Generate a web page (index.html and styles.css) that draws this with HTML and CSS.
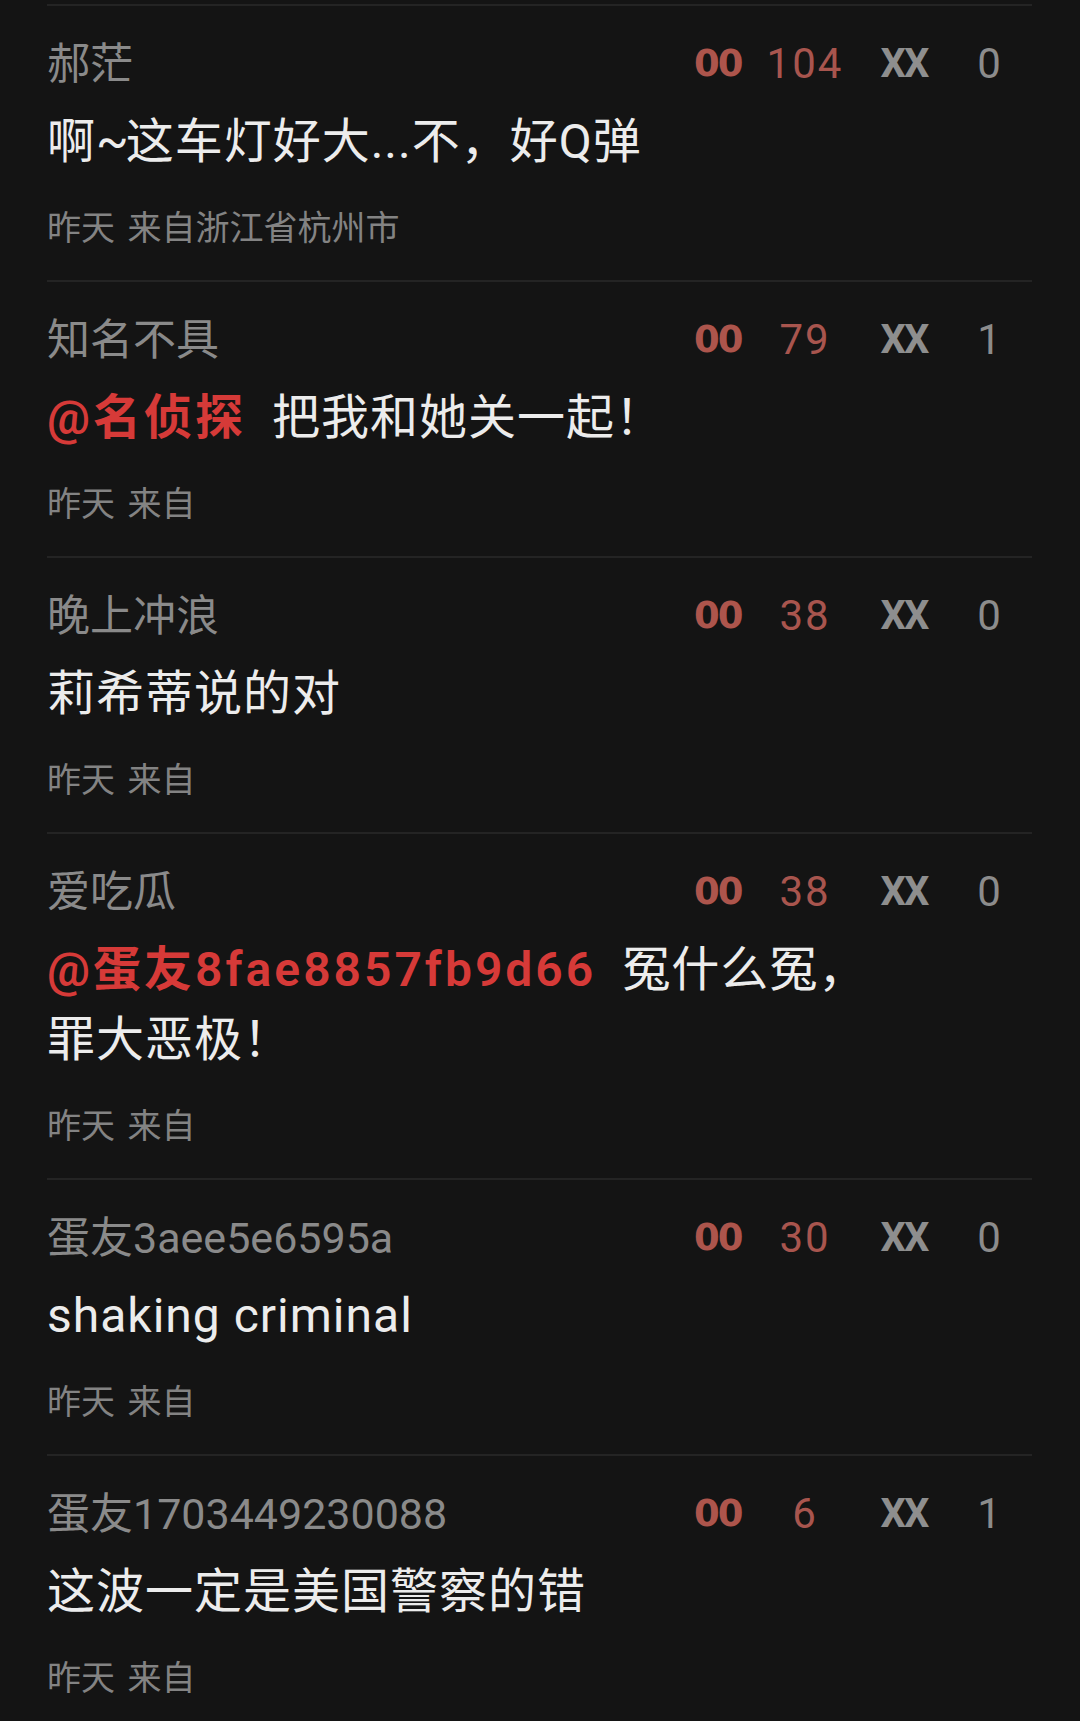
FILE: index.html
```html
<!DOCTYPE html>
<html lang="zh-CN">
<head>
<meta charset="utf-8">
<title>评论</title>
<link rel="stylesheet" href="styles.css">
</head>
<body>
<div class="list">
  <div class="comment">
    <div class="head">
      <span class="name">郝茫</span>
      <div class="stats">
        <span class="icon up">00</span><span class="count up">104</span>
        <span class="icon down">XX</span><span class="count down">0</span>
      </div>
    </div>
    <p class="text">啊<span class="tilde">~</span>这车灯好大...不，好Q弹</p>
    <div class="meta">昨天 来自浙江省杭州市</div>
  </div>
  <div class="comment">
    <div class="head">
      <span class="name">知名不具</span>
      <div class="stats">
        <span class="icon up">00</span><span class="count up">79</span>
        <span class="icon down">XX</span><span class="count down">1</span>
      </div>
    </div>
    <p class="text"><span class="mention">@名侦探</span>把我和她关一起！</p>
    <div class="meta">昨天 来自</div>
  </div>
  <div class="comment">
    <div class="head">
      <span class="name">晚上冲浪</span>
      <div class="stats">
        <span class="icon up">00</span><span class="count up">38</span>
        <span class="icon down">XX</span><span class="count down">0</span>
      </div>
    </div>
    <p class="text">莉希蒂说的对</p>
    <div class="meta">昨天 来自</div>
  </div>
  <div class="comment">
    <div class="head">
      <span class="name">爱吃瓜</span>
      <div class="stats">
        <span class="icon up">00</span><span class="count up">38</span>
        <span class="icon down">XX</span><span class="count down">0</span>
      </div>
    </div>
    <p class="text"><span class="mention">@蛋友8fae8857fb9d66</span>冤什么冤，罪大恶极！</p>
    <div class="meta">昨天 来自</div>
  </div>
  <div class="comment">
    <div class="head">
      <span class="name">蛋友3aee5e6595a</span>
      <div class="stats">
        <span class="icon up">00</span><span class="count up">30</span>
        <span class="icon down">XX</span><span class="count down">0</span>
      </div>
    </div>
    <p class="text">shaking criminal</p>
    <div class="meta">昨天 来自</div>
  </div>
  <div class="comment">
    <div class="head">
      <span class="name">蛋友1703449230088</span>
      <div class="stats">
        <span class="icon up">00</span><span class="count up">6</span>
        <span class="icon down">XX</span><span class="count down">1</span>
      </div>
    </div>
    <p class="text">这波一定是美国警察的错</p>
    <div class="meta">昨天 来自</div>
  </div>
</div>
</body>
</html>
```

FILE: styles.css
```css
html, body {
  margin: 0;
  padding: 0;
  background: #141414;
}

body {
  font-family: "Roboto", "Noto Sans CJK SC", sans-serif;
  color: #e8e8e8;
}

.list {
  padding: 4px 48px 0 47px;
}

.comment {
  border-top: 2px solid #242424;
  padding: 30px 0 27px;
}

.head {
  display: flex;
  align-items: center;
  justify-content: space-between;
  height: 56px;
}

.name {
  font-size: 43px;
  line-height: 56px;
  color: #8a8a8a;
  white-space: nowrap;
}

.stats {
  display: grid;
  grid-template-columns: 56px 110px 88px 84px;
  align-items: center;
  line-height: 56px;
}

.icon {
  font-weight: 700;
  font-size: 40px;
}

.icon.up {
  justify-self: start;
  font-family: "DejaVu Sans", "Roboto", sans-serif;
  font-size: 37px;
  letter-spacing: -2px;
  color: #ad554c;
}

.icon.down {
  justify-self: center;
  letter-spacing: -2px;
  color: #8e8e8e;
}

.count {
  justify-self: center;
  font-size: 42px;
  letter-spacing: 2px;
}

.count.up {
  color: #a8554e;
}

.count.down {
  color: #8c8c8c;
}

.text {
  margin: 15px 0 0;
  max-width: 850px;
  font-size: 48px;
  line-height: 70px;
  letter-spacing: 1px;
  color: #ececec;
}

.tilde {
  letter-spacing: -3px;
}

.mention {
  color: #d63a38;
  font-weight: 600;
  letter-spacing: 3px;
  margin-right: 26px;
}

.meta {
  margin-top: 26px;
  font-size: 34px;
  line-height: 50px;
  word-spacing: 4px;
  color: #838383;
}
```
